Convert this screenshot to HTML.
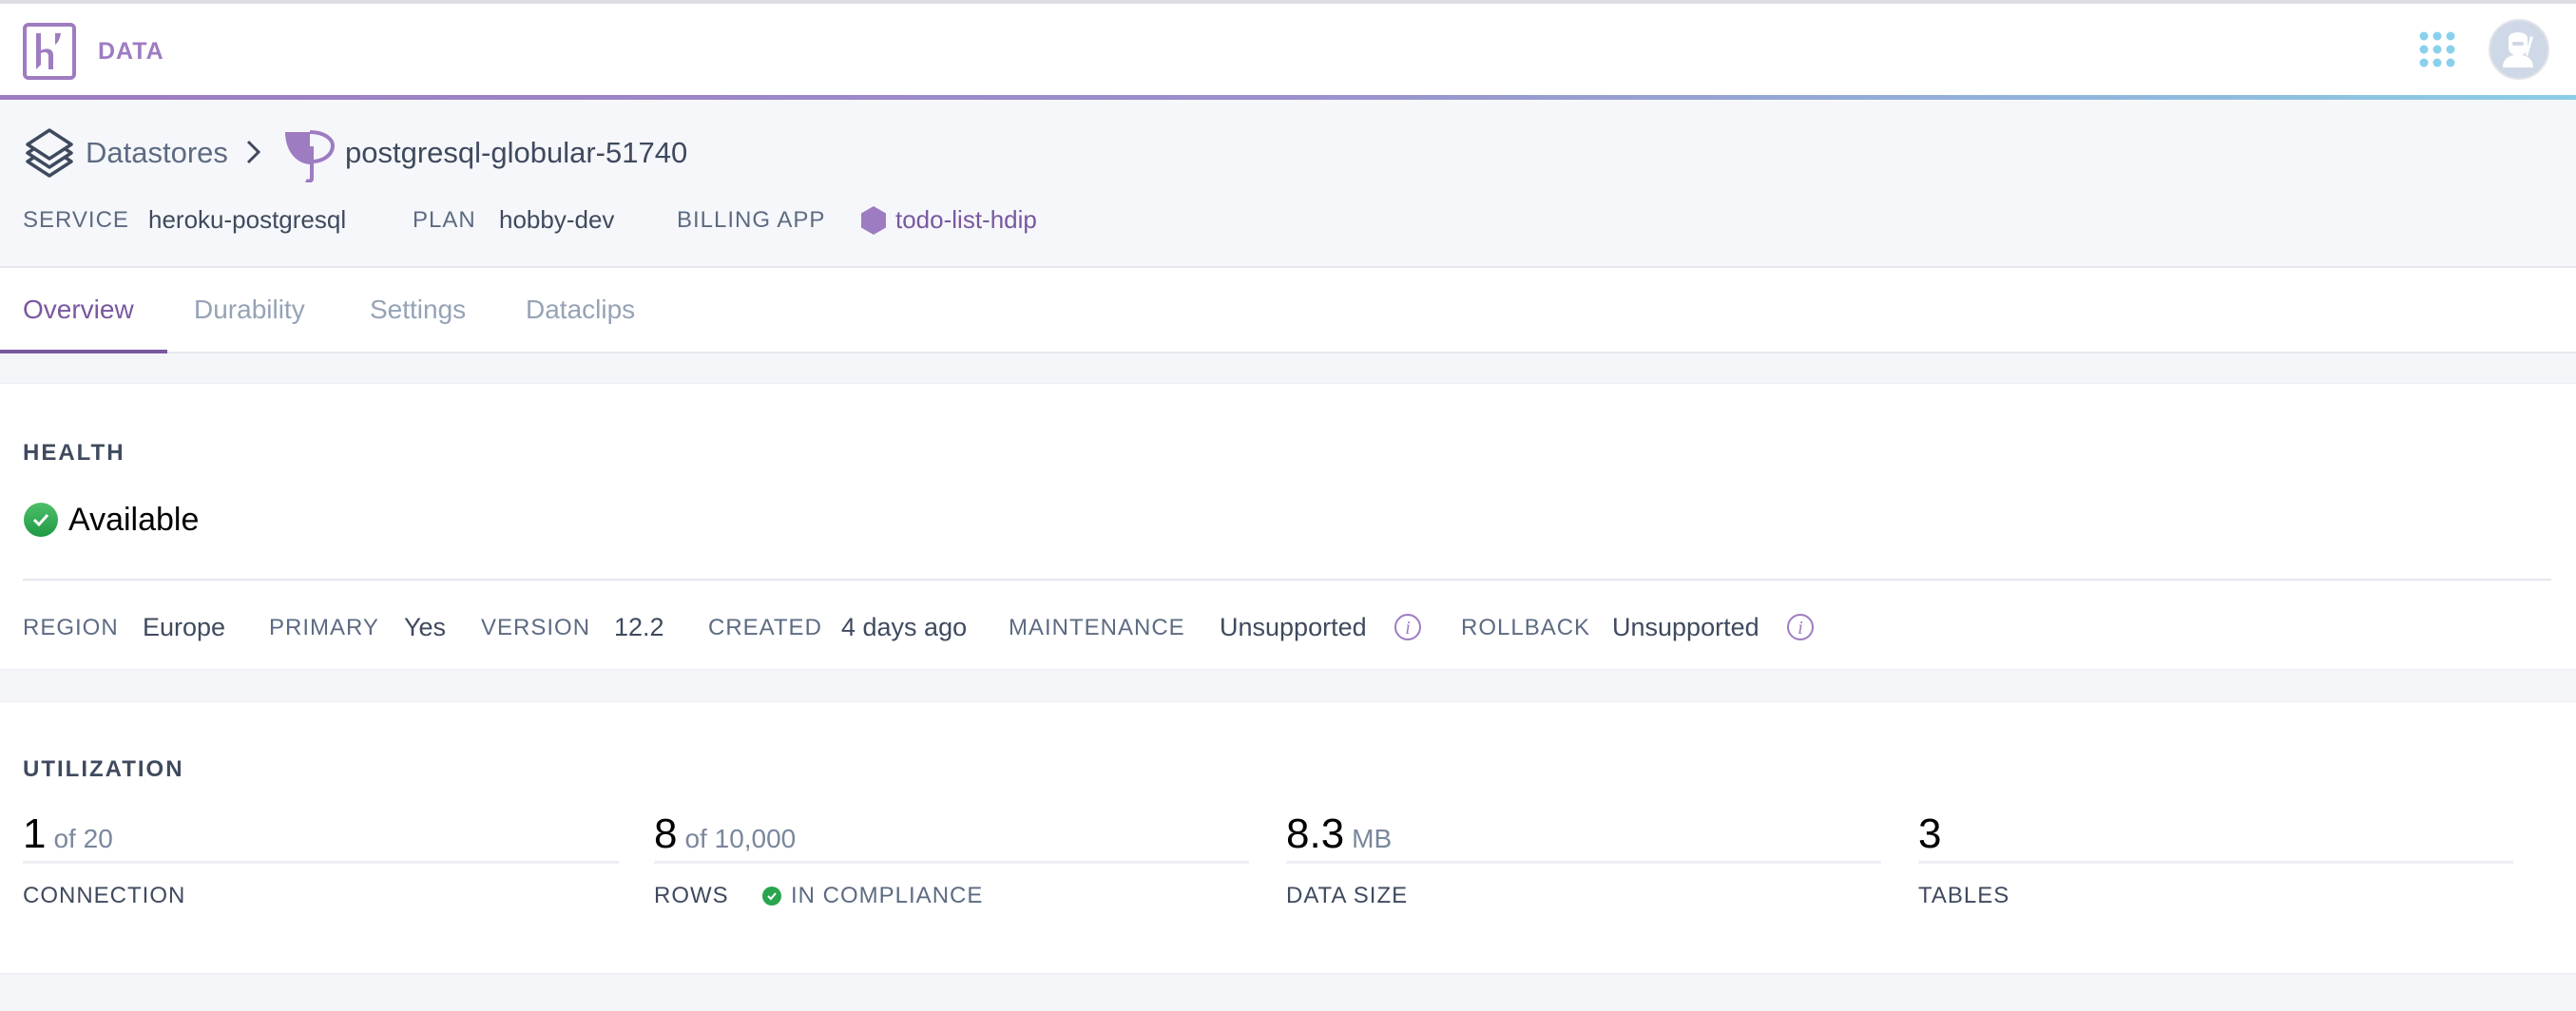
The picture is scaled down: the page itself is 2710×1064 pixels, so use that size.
<!DOCTYPE html>
<html><head><meta charset="utf-8"><style>
*{margin:0;padding:0;box-sizing:border-box}
body{width:2710px;height:1064px;background:#f4f5f9;font-family:"Liberation Sans",sans-serif;position:relative;overflow:hidden}
.t{position:absolute;white-space:nowrap;line-height:1}
.lab{font-size:24px;letter-spacing:1px;color:#5d6b82}
.val{font-size:27px;color:#3f4a5e}
.h{font-size:24px;font-weight:bold;letter-spacing:2px;color:#3f4a5e}
.blk{position:absolute;left:0;width:2710px}
.big{font-size:44px;color:#000}
.of{font-size:28px;color:#7a879c;margin-left:8px}
.ul{position:absolute;height:3px;background:#eceff4;top:906px}
</style></head><body>
<div class="blk" style="top:0;height:4px;background:#dcdde2"></div>
<div class="blk" style="top:4px;height:100px;background:#fff"></div>
<div class="blk" style="top:100px;height:5px;background:linear-gradient(90deg,#9e7cc1,#9a8fcc 50%,#8acde6)"></div>
<div class="blk" style="top:105px;height:177px;background:#f6f7fb;border-bottom:2px solid #e6e8ef"></div>
<div class="blk" style="top:282px;height:90px;background:#fff;border-bottom:2px solid #e6e8ef"></div>
<div class="blk" style="top:403px;height:302px;background:#fff;border-top:1px solid #eceef3;border-bottom:1px solid #eceef3"></div>
<div class="blk" style="top:738px;height:287px;background:#fff;border-top:1px solid #eceef3;border-bottom:1px solid #eceef3"></div>

<!-- logo -->
<svg style="position:absolute;left:24px;top:24px" width="56" height="60" viewBox="0 0 56 60"><rect x="2" y="2" width="52" height="56" rx="4" fill="none" stroke="#9e7cc1" stroke-width="4"/><path d="M14 11h5v18c6-3 13-2 13 5v15h-5V35c0-4-4-5-8-3v12l-5 5z" fill="#9e7cc1"/><path d="M34 11h6c-1 6-3 10-6 12z" fill="#9e7cc1"/></svg>
<div class="t" style="left:103px;top:42px;font-size:25px;font-weight:bold;color:#9e7cc1;letter-spacing:1px">DATA</div>

<!-- grid -->
<svg style="position:absolute;left:2545px;top:33px" width="42" height="40"><g fill="#8ad0ec">
<circle cx="5" cy="5" r="4.5"/><circle cx="19" cy="5" r="4.5"/><circle cx="33" cy="5" r="4.5"/>
<circle cx="5" cy="19" r="4.5"/><circle cx="19" cy="19" r="4.5"/><circle cx="33" cy="19" r="4.5"/>
<circle cx="5" cy="33" r="4.5"/><circle cx="19" cy="33" r="4.5"/><circle cx="33" cy="33" r="4.5"/></g></svg>
<svg style="position:absolute;left:2618px;top:20px" width="64" height="64"><circle cx="32" cy="32" r="31" fill="#cfd8e6" stroke="#e2e4e8" stroke-width="2"/><path d="M21 20c0-8 20-8 20 0v10c0 4-3 7-6 8 7 1 12 5 12 13H15c0-8 5-12 12-13-3-1-6-4-6-8z" fill="#fff"/><rect x="25" y="24" width="12" height="4" rx="2" fill="#cfd8e6"/><path d="M44 18l3 1-6 20-2-1z" fill="#fff"/></svg>

<!-- breadcrumb -->
<svg style="position:absolute;left:24px;top:134px" width="56" height="56" viewBox="0 0 56 56" fill="none" stroke="#3f4a5e" stroke-width="3.5" stroke-linejoin="round"><path d="M28 3L51 18 28 33 5 18z"/><path d="M11 23L5 27 28 42 51 27 45 23"/><path d="M11 32L5 36 28 51 51 36 45 32"/></svg>
<div class="t" style="left:90px;top:145px;font-size:31px;color:#5d6b82">Datastores</div>
<svg style="position:absolute;left:258px;top:146px" width="18" height="28"><path d="M3 3l11 11L3 25" fill="none" stroke="#3f4a5e" stroke-width="3"/></svg>
<svg style="position:absolute;left:297px;top:134px" width="58" height="58" viewBox="0 0 58 58"><path d="M3 5h26v34C14 38 3 24 3 5z" fill="#9e7cc1"/><path d="M29 5c16 0 24 8 24 14 0 10-10 17-22 17" fill="none" stroke="#9e7cc1" stroke-width="4"/><path d="M31 20v34c0 3-4 3-6 2" fill="none" stroke="#9e7cc1" stroke-width="4"/></svg>
<div class="t" style="left:363px;top:145px;font-size:31px;color:#3f4a5e">postgresql-globular-51740</div>

<div class="t lab" style="left:24px;top:220px">SERVICE</div>
<div class="t val" style="left:156px;top:218px;font-size:26px">heroku-postgresql</div>
<div class="t lab" style="left:434px;top:220px">PLAN</div>
<div class="t val" style="left:525px;top:218px;font-size:26px">hobby-dev</div>
<div class="t lab" style="left:712px;top:220px">BILLING APP</div>
<svg style="position:absolute;left:904px;top:216px" width="30" height="32"><path d="M15 1l13 7.5v15L15 31 2 23.5v-15z" fill="#9e7cc1"/></svg>
<div class="t val" style="left:942px;top:218px;font-size:26px;color:#79589f">todo-list-hdip</div>

<!-- tabs -->
<div class="t" style="left:24px;top:312px;font-size:28px;color:#79589f">Overview</div>
<div class="t" style="left:204px;top:312px;font-size:28px;color:#96a3b6">Durability</div>
<div class="t" style="left:389px;top:312px;font-size:28px;color:#96a3b6">Settings</div>
<div class="t" style="left:553px;top:312px;font-size:28px;color:#96a3b6">Dataclips</div>
<div style="position:absolute;left:0;top:368px;width:176px;height:4px;background:#79589f"></div>

<!-- health -->
<div class="t h" style="left:24px;top:465px">HEALTH</div>
<svg style="position:absolute;left:25px;top:529px" width="36" height="36"><defs><linearGradient id="g" x1="0" y1="0" x2="0" y2="1"><stop offset="0" stop-color="#4fbf6a"/><stop offset="1" stop-color="#1e9a44"/></linearGradient></defs><circle cx="18" cy="18" r="18" fill="url(#g)"/><path d="M11 18l5 5 9-10" fill="none" stroke="#fff" stroke-width="3"/></svg>
<div class="t" style="left:72px;top:530px;font-size:34px;color:#000">Available</div>
<div style="position:absolute;left:24px;top:609px;width:2660px;height:2px;background:#e3e6ee"></div>

<div class="t lab" style="left:24px;top:649px">REGION</div>
<div class="t val" style="left:150px;top:647px">Europe</div>
<div class="t lab" style="left:283px;top:649px">PRIMARY</div>
<div class="t val" style="left:425px;top:647px">Yes</div>
<div class="t lab" style="left:506px;top:649px">VERSION</div>
<div class="t val" style="left:646px;top:647px">12.2</div>
<div class="t lab" style="left:745px;top:649px">CREATED</div>
<div class="t val" style="left:885px;top:647px">4 days ago</div>
<div class="t lab" style="left:1061px;top:649px">MAINTENANCE</div>
<div class="t val" style="left:1283px;top:647px">Unsupported</div>
<svg style="position:absolute;left:1466px;top:645px" width="30" height="30"><circle cx="15" cy="15" r="13" fill="none" stroke="#9e7cc1" stroke-width="2"/><text x="15" y="22" font-family="Liberation Serif" font-style="italic" font-size="20" fill="#9e7cc1" text-anchor="middle">i</text></svg>
<div class="t lab" style="left:1537px;top:649px">ROLLBACK</div>
<div class="t val" style="left:1696px;top:647px">Unsupported</div>
<svg style="position:absolute;left:1879px;top:645px" width="30" height="30"><circle cx="15" cy="15" r="13" fill="none" stroke="#9e7cc1" stroke-width="2"/><text x="15" y="22" font-family="Liberation Serif" font-style="italic" font-size="20" fill="#9e7cc1" text-anchor="middle">i</text></svg>

<!-- utilization -->
<div class="t h" style="left:24px;top:798px">UTILIZATION</div>
<div class="t" style="left:24px;top:856px"><span class="big">1</span><span class="of">of 20</span></div>
<div class="t" style="left:688px;top:856px"><span class="big">8</span><span class="of">of 10,000</span></div>
<div class="t" style="left:1353px;top:856px"><span class="big">8.3</span><span class="of">MB</span></div>
<div class="t" style="left:2018px;top:856px"><span class="big">3</span></div>
<div class="ul" style="left:24px;width:627px"></div>
<div class="ul" style="left:688px;width:626px"></div>
<div class="ul" style="left:1353px;width:626px"></div>
<div class="ul" style="left:2018px;width:626px"></div>
<div class="t lab" style="left:24px;top:931px;color:#3f4a5e">CONNECTION</div>
<div class="t lab" style="left:688px;top:931px;color:#3f4a5e">ROWS</div>
<svg style="position:absolute;left:802px;top:933px" width="20" height="20"><circle cx="10" cy="10" r="10" fill="#2aa44d"/><path d="M6 10l3 3 5-6" fill="none" stroke="#fff" stroke-width="2"/></svg>
<div class="t lab" style="left:832px;top:931px">IN COMPLIANCE</div>
<div class="t lab" style="left:1353px;top:931px;color:#3f4a5e">DATA SIZE</div>
<div class="t lab" style="left:2018px;top:931px;color:#3f4a5e">TABLES</div>
</body></html>
